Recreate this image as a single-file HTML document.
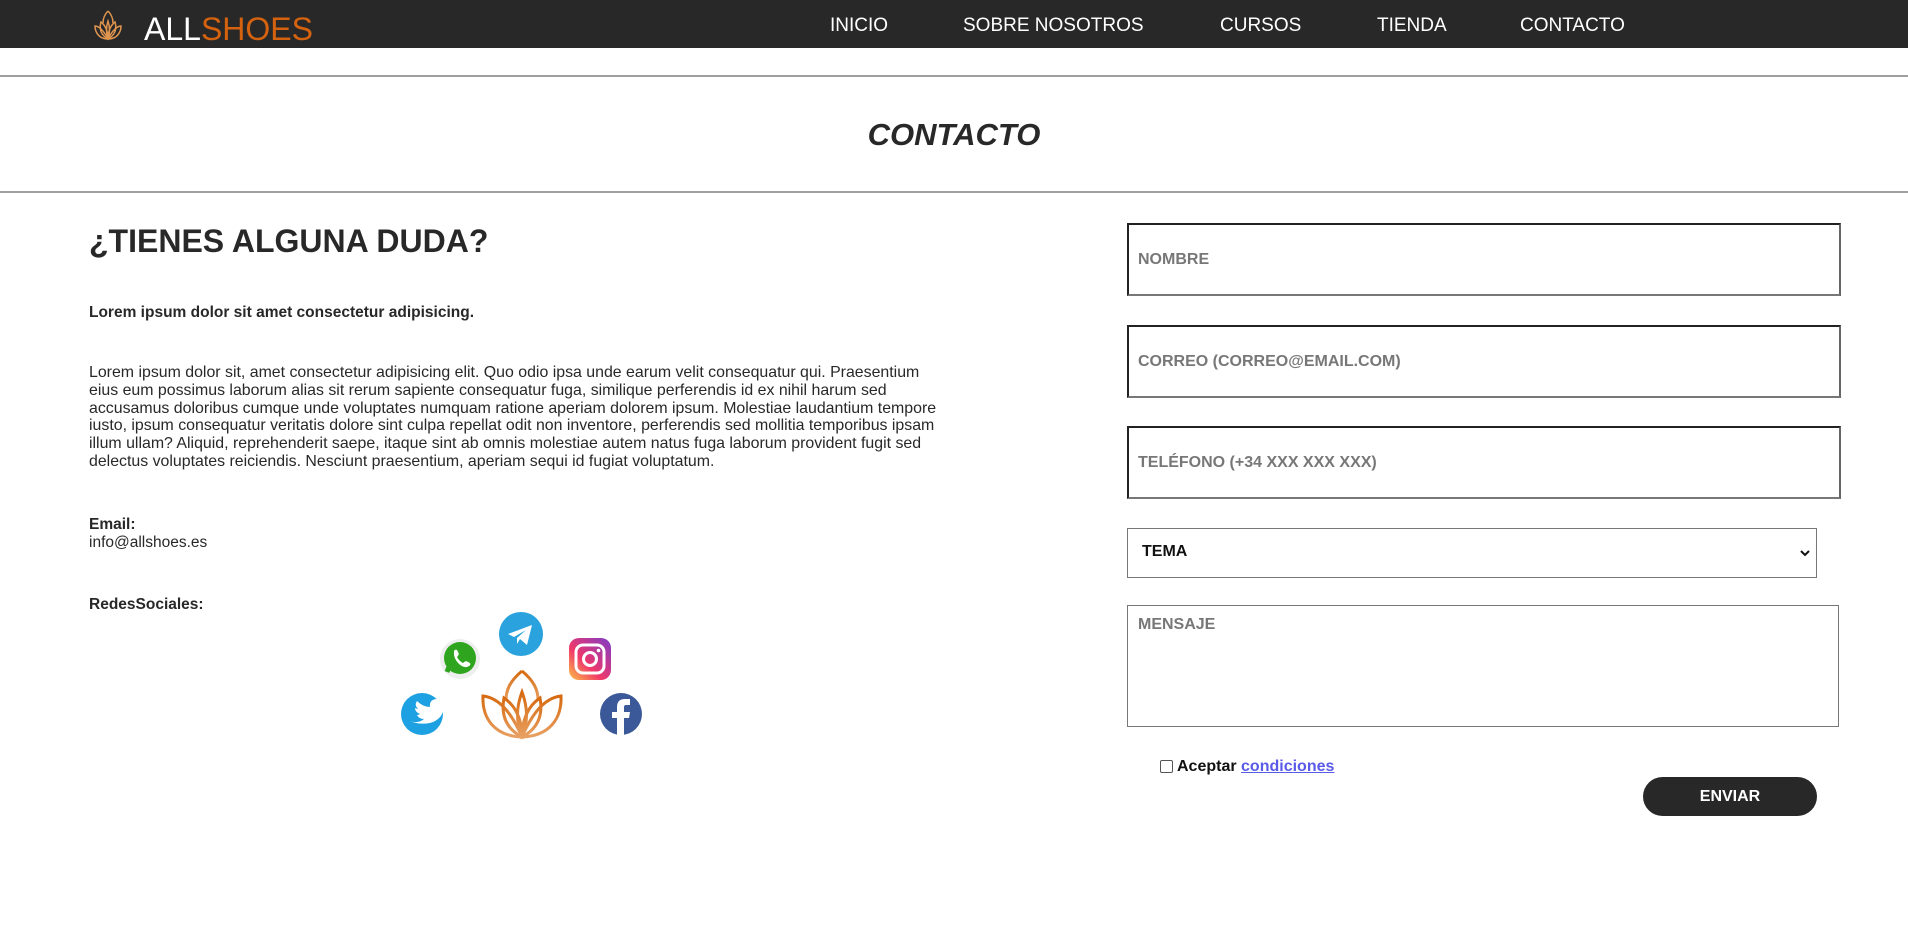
<!DOCTYPE html>
<html><head><meta charset="utf-8"><style>
*{margin:0;padding:0;box-sizing:border-box}
body{width:1908px;height:931px;background:#fff;font-family:"Liberation Sans",Arial,sans-serif;color:#282828;position:relative;overflow:hidden}
.hdr{position:absolute;left:0;top:0;width:1908px;height:48px;background:#282828}
.logo{position:absolute;left:144px;top:9px;font-size:32px;color:#fff;line-height:40px}
.logo span{color:#d4620e}
.nav a{position:absolute;top:15px;color:#fff;font-size:19px;text-decoration:none;line-height:22px}
.hr{position:absolute;left:0;width:1908px;height:2px;background:#a0a0a0}
.title{position:absolute;left:0;width:1908px;top:116px;text-align:center;font-size:31px;font-weight:bold;font-style:italic;line-height:38px}
.abs{position:absolute}
.inp{position:absolute;left:1127px;width:714px;height:73px;border:2px solid;border-top-color:#222;border-left-color:#222;border-right-color:#666;border-bottom-color:#777}
.ph{position:absolute;left:1138px;font-size:16px;font-weight:bold;color:#777}
</style></head><body>
<div class="hdr">
<svg class="abs" style="left:90px;top:9px" width="36" height="32" viewBox="0 0 30 32" fill="none" stroke="#e0954f" stroke-width="1.5">
<path d="M15 2 C11 6 10 10 10 14 M15 2 C19 6 20 10 20 14"/>
<path d="M15 30 C8 26 6 20 8 13 C12 16 15 22 15 30 Z"/>
<path d="M15 30 C22 26 24 20 22 13 C18 16 15 22 15 30 Z"/>
<path d="M15 30 C5 30 2 22 2 17 C6 17 11 22 15 30"/>
<path d="M15 30 C25 30 28 22 28 17 C24 17 19 22 15 30"/>
<path d="M15 30 C13 24 13 18 15 12 C17 18 17 24 15 30"/>
</svg>
<div class="logo">ALL<span>SHOES</span></div>
<div class="nav">
<a style="left:830px">INICIO</a>
<a style="left:963px">SOBRE NOSOTROS</a>
<a style="left:1220px">CURSOS</a>
<a style="left:1377px">TIENDA</a>
<a style="left:1520px">CONTACTO</a>
</div>
</div>
<div class="hr" style="top:75px"></div>
<div class="title">CONTACTO</div>
<div class="hr" style="top:191px"></div>

<div class="abs" style="left:89px;top:222px;font-size:32px;font-weight:bold;line-height:38px">¿TIENES ALGUNA DUDA?</div>
<div class="abs" style="left:89px;top:304px;font-size:15.5px;font-weight:bold">Lorem ipsum dolor sit amet consectetur adipisicing.</div>
<div class="abs" style="left:89px;top:364px;width:860px;font-size:15.9px;line-height:17.8px">Lorem ipsum dolor sit, amet consectetur adipisicing elit. Quo odio ipsa unde earum velit consequatur qui. Praesentium eius eum possimus laborum alias sit rerum sapiente consequatur fuga, similique perferendis id ex nihil harum sed accusamus doloribus cumque unde voluptates numquam ratione aperiam dolorem ipsum. Molestiae laudantium tempore iusto, ipsum consequatur veritatis dolore sint culpa repellat odit non inventore, perferendis sed mollitia temporibus ipsam illum ullam? Aliquid, reprehenderit saepe, itaque sint ab omnis molestiae autem natus fuga laborum provident fugit sed delectus voluptates reiciendis. Nesciunt praesentium, aperiam sequi id fugiat voluptatum.</div>
<div class="abs" style="left:89px;top:516px;font-size:15.5px;line-height:18px"><b>Email:</b><br>info@allshoes.es</div>
<div class="abs" style="left:89px;top:596px;font-size:15.5px;font-weight:bold">RedesSociales:</div>

<svg class="abs" style="left:395px;top:605px" width="260" height="140" viewBox="395 605 260 140">
<defs><linearGradient id="ig" x1="0" y1="1" x2="1" y2="0"><stop offset="0" stop-color="#fdc145"/><stop offset=".4" stop-color="#f0386a"/><stop offset="1" stop-color="#7d3cc9"/></linearGradient>
<linearGradient id="lo" x1="0" y1="0" x2="0" y2="1"><stop offset="0" stop-color="#d66a10"/><stop offset="1" stop-color="#e8a062"/></linearGradient></defs>
<circle cx="422" cy="714" r="21" fill="#1da1e2"/>
<path d="M410 721 q8 3 14 -2 q-5 0 -7 -4 q2 0 3 -1 q-5 -2 -5 -6 q2 1 3 1 q-4 -4 -1 -8 q6 6 13 6 q-1 -7 6 -8 q3 0 5 2 l4 -2 l-2 4 l4 -1 l-3 3 q0 14 -14 18 q-11 2 -20 -2z" fill="#fff"/>
<circle cx="460" cy="659" r="20" fill="#eee"/>
<circle cx="460" cy="658" r="16" fill="#2fa51f"/>
<path d="M447 672 l3 -8" stroke="#2fa51f" stroke-width="5"/>
<path d="M454 651 q1 -2 3 -1 l2 4 q-1 2 -2 3 q2 4 6 6 q1 -1 3 -2 l4 2 q1 2 -1 3 q-4 3 -10 -2 q-6 -6 -5 -13z" fill="#fff"/>
<circle cx="521" cy="634" r="22" fill="#2aa2de"/>
<path d="M508 634 l24 -9 l-5 20 l-7 -6 l-3 5 l0 -6 l9 -8 l-12 7z" fill="#fff"/>
<rect x="569" y="638" width="42" height="42" rx="10" fill="url(#ig)"/>
<rect x="576" y="645" width="28" height="28" rx="7" fill="none" stroke="#fff" stroke-width="3"/>
<circle cx="590" cy="659" r="6.5" fill="none" stroke="#fff" stroke-width="3"/>
<circle cx="598.5" cy="650.5" r="1.8" fill="#fff"/>
<circle cx="621" cy="714" r="21" fill="#3b5998"/>
<path d="M617 735 v-17 h-5 v-6 h5 v-5 q0 -8 8 -8 h5 v6 h-4 q-2 0 -2 2 v5 h6 l-1 6 h-5 v17z" fill="#fff"/>
<g fill="none" stroke="url(#lo)" stroke-width="3">
<path d="M522 671 C510 681 506 690 506 700 M522 671 C534 681 538 690 538 700"/>
<path d="M522 737 C505 728 501 714 504 698 C516 706 522 720 522 737Z"/>
<path d="M522 737 C539 728 543 714 540 698 C528 706 522 720 522 737Z"/>
<path d="M522 737 C494 736 482 718 483 696 C500 698 512 714 522 737"/>
<path d="M522 737 C550 736 562 718 561 696 C544 698 532 714 522 737"/>
<path d="M522 737 C516 722 516 708 522 692 C528 708 528 722 522 737"/>
</g>
</svg>

<div class="inp" style="top:223px"></div><div class="ph" style="top:251px">NOMBRE</div>
<div class="inp" style="top:325px"></div><div class="ph" style="top:353px">CORREO (CORREO@EMAIL.COM)</div>
<div class="inp" style="top:426px"></div><div class="ph" style="top:454px">TELÉFONO (+34 XXX XXX XXX)</div>
<div class="abs" style="left:1127px;top:528px;width:690px;height:50px;border:1px solid #777"></div>
<div class="abs" style="left:1142px;top:543px;font-size:16px;font-weight:bold;color:#111">TEMA</div>
<svg class="abs" style="left:1800px;top:549px" width="10" height="8" viewBox="0 0 10 8"><path d="M1 2 L5 6 L9 2" fill="none" stroke="#111" stroke-width="2"/></svg>
<div class="abs" style="left:1127px;top:605px;width:712px;height:122px;border:1px solid #777"></div>
<div class="ph" style="top:616px">MENSAJE</div>
<div class="abs" style="left:1160px;top:760px;width:13px;height:13px;border:1px solid #555;border-radius:2px"></div>
<div class="abs" style="left:1177px;top:758px;font-size:16px;font-weight:bold;color:#111">Aceptar <span style="color:#5a5ae8;text-decoration:underline">condiciones</span></div>
<div class="abs" style="left:1643px;top:777px;width:174px;height:39px;border-radius:20px;background:#282828;color:#fff;font-size:16px;font-weight:bold;text-align:center;line-height:39px">ENVIAR</div>
</body></html>
